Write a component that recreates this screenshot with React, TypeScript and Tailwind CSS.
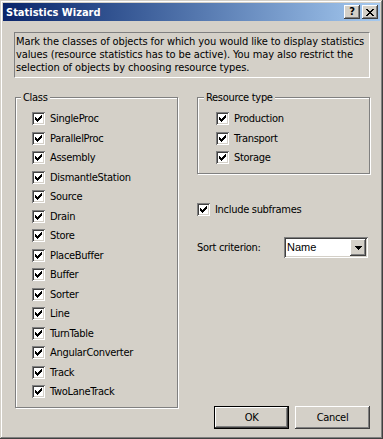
import React from "react";

const raised =
  "shadow-[inset_-1px_-1px_#404040,inset_1px_1px_#ffffff,inset_-2px_-2px_#808080,inset_2px_2px_#d4d0c8]";

function CheckMark() {
  return (
    <svg width="7" height="7" viewBox="0 0 7 7" shapeRendering="crispEdges">
      <rect x="6" y="0" width="1" height="1" fill="#000" />
      <rect x="5" y="1" width="2" height="1" fill="#000" />
      <rect x="0" y="2" width="1" height="1" fill="#000" />
      <rect x="4" y="2" width="3" height="1" fill="#000" />
      <rect x="0" y="3" width="2" height="1" fill="#000" />
      <rect x="3" y="3" width="3" height="1" fill="#000" />
      <rect x="0" y="4" width="5" height="1" fill="#000" />
      <rect x="1" y="5" width="3" height="1" fill="#000" />
      <rect x="2" y="6" width="1" height="1" fill="#000" />
    </svg>
  );
}

function Check() {
  return (
    <span className="flex items-center justify-center w-[13px] h-[13px] shrink-0 bg-white shadow-[inset_1px_1px_#808080,inset_-1px_-1px_#ffffff,inset_2px_2px_#404040,inset_-2px_-2px_#d4d0c8]">
      <CheckMark />
    </span>
  );
}

function Row({ label }: { label: string }) {
  return (
    <div className="flex items-center h-[19.5px] gap-[5px]">
      <Check />
      <span className="whitespace-nowrap">{label}</span>
    </div>
  );
}

const classes = [
  "SingleProc",
  "ParallelProc",
  "Assembly",
  "DismantleStation",
  "Source",
  "Drain",
  "Store",
  "PlaceBuffer",
  "Buffer",
  "Sorter",
  "Line",
  "TurnTable",
  "AngularConverter",
  "Track",
  "TwoLaneTrack",
];

const resources = ["Production", "Transport", "Storage"];

function CloseGlyph() {
  const rows: [number, number][][] = [
    [[0, 2], [6, 2]],
    [[1, 2], [5, 2]],
    [[2, 4]],
    [[3, 2]],
    [[2, 4]],
    [[1, 2], [5, 2]],
    [[0, 2], [6, 2]],
  ];
  return (
    <svg width="8" height="7" viewBox="0 0 8 7" shapeRendering="crispEdges">
      {rows.map((r, y) =>
        r.map(([x, w], i) => <rect key={`${y}-${i}`} x={x} y={y} width={w} height={1} fill="#000" />)
      )}
    </svg>
  );
}

function DownArrow() {
  return (
    <svg width="7" height="4" viewBox="0 0 7 4" shapeRendering="crispEdges">
      <rect x="0" y="0" width="7" height="1" fill="#000" />
      <rect x="1" y="1" width="5" height="1" fill="#000" />
      <rect x="2" y="2" width="3" height="1" fill="#000" />
      <rect x="3" y="3" width="1" height="1" fill="#000" />
    </svg>
  );
}

export default function App() {
  return (
    <div className="w-[383px] h-[439px] bg-[#d4d0c8] p-[3px] shadow-[inset_-1px_-1px_#404040,inset_1px_1px_#d4d0c8,inset_-2px_-2px_#808080,inset_2px_2px_#ffffff] font-['DejaVu_Sans_Condensed','Liberation_Sans',sans-serif] text-[11px] leading-[13px] text-black flex flex-col overflow-hidden">
      {/* Title bar */}
      <div className="h-[18px] flex items-center bg-linear-to-r from-[#0a246a] to-[#a6caf0] pl-[3px] pr-[2px] shrink-0">
        <span className="font-bold text-white flex-1 whitespace-nowrap">Statistics Wizard</span>
        <div className="flex gap-[2px]">
          <div className={`w-[16px] h-[14px] bg-[#d4d0c8] flex items-center justify-center font-bold text-[11px] leading-[11px] pb-[1px] ${raised}`}>
            ?
          </div>
          <div className={`w-[16px] h-[14px] bg-[#d4d0c8] flex items-center justify-center ${raised}`}>
            <CloseGlyph />
          </div>
        </div>
      </div>

      {/* Body */}
      <div className="pl-[11px] pr-[10px] pt-[11px] tracking-[-0.3px]">
        <div className="h-[46px] border border-t-[#808080] border-l-[#808080] border-r-white border-b-white pl-[1px] pt-[2px] whitespace-nowrap tracking-[-0.1px]">
          Mark the classes of objects for which you would like to display statistics
          <br />
          values (resource statistics has to be active). You may also restrict the
          <br />
          selection of objects by choosing resource types.
        </div>

        <div className="flex mt-[19px] ml-[1px] gap-[19px]">
          {/* Class group */}
          <div className="w-[163px] h-[311px] border border-[#808080] shadow-[inset_1px_1px_#ffffff,1px_1px_#ffffff] pl-[16px] flex flex-col">
            <span className="-mt-[7px] -ml-[11px] w-fit px-[2px] bg-[#d4d0c8]">Class</span>
            <div className="mt-[5px] flex flex-col">
              {classes.map((c) => (
                <Row key={c} label={c} />
              ))}
            </div>
          </div>

          {/* Right column */}
          <div className="w-[173px] flex flex-col">
            <div className="h-[77px] border border-[#808080] shadow-[inset_1px_1px_#ffffff,1px_1px_#ffffff] pl-[18px] flex flex-col">
              <span className="-mt-[7px] -ml-[12px] w-fit px-[2px] bg-[#d4d0c8]">Resource type</span>
              <div className="mt-[5px] flex flex-col">
                {resources.map((c) => (
                  <Row key={c} label={c} />
                ))}
              </div>
            </div>

            <div className="mt-[29px] h-[13px] flex items-center gap-[5px]">
              <Check />
              <span>Include subframes</span>
            </div>

            <div className="mt-[21px] h-[21px] flex items-center">
              <span className="w-[87px]">Sort criterion:</span>
              <div className="w-[84px] h-[21px] bg-white flex items-center p-[2px] shadow-[inset_1px_1px_#808080,inset_-1px_-1px_#ffffff,inset_2px_2px_#404040,inset_-2px_-2px_#d4d0c8]">
                <span className="flex-1 pl-[1px] tracking-normal font-['Liberation_Sans',sans-serif]">Name</span>
                <div className={`w-[16px] h-[17px] bg-[#d4d0c8] flex items-center justify-center ${raised}`}>
                  <DownArrow />
                </div>
              </div>
            </div>

            <div className="mt-[148px] flex justify-end gap-[6px]">
              <div className="w-[75px] h-[23px] border border-black">
                <div className={`w-full h-full bg-[#d4d0c8] flex items-center justify-center ${raised}`}>OK</div>
              </div>
              <div className={`w-[75px] h-[23px] bg-[#d4d0c8] flex items-center justify-center ${raised}`}>Cancel</div>
            </div>
          </div>
        </div>
      </div>
    </div>
  );
}
